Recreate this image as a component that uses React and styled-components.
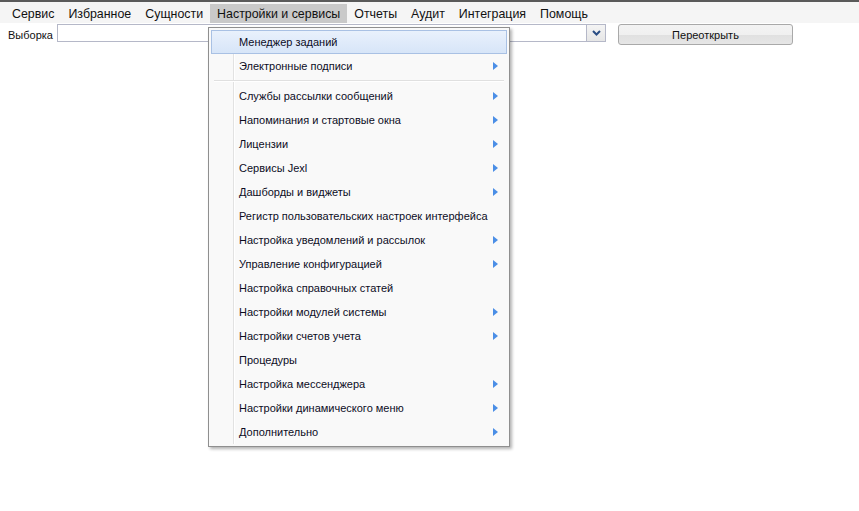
import React from 'react';
import styled, { createGlobalStyle } from 'styled-components';

const GlobalStyle = createGlobalStyle`
  html, body {
    margin: 0;
    padding: 0;
    background: #ffffff;
    font-family: 'Liberation Sans', Arial, sans-serif;
  }
`;

const Page = styled.div`
  position: relative;
  width: 859px;
  height: 511px;
  border-top: 2px solid #5a5a5a;
  box-sizing: border-box;
`;

const MenuBar = styled.div`
  display: flex;
  align-items: stretch;
  height: 21px;
  padding: 2px 0 0 5px;
  background: #f5f5f5;
  box-sizing: border-box;
`;

const MenuBarItem = styled.div`
  display: flex;
  align-items: center;
  padding: 0 7px;
  font-size: 12.4px;
  color: #111;
  background: ${(p) => (p.$active ? '#c9c9c9' : 'transparent')};
  height: 19px;
`;

const FilterRow = styled.div`
  display: flex;
  align-items: flex-start;
  padding: 1px 0 0 8px;
`;

const Label = styled.span`
  font-size: 11px;
  color: #111;
  width: 49px;
  line-height: 18px;
  margin-top: 2px;
`;

const Combo = styled.div`
  display: flex;
  height: 18px;
`;

const ComboInput = styled.div`
  width: 528px;
  height: 16px;
  border: 1px solid #b5b8c8;
  border-right: none;
  background: #fff;
`;

const ComboTrigger = styled.div`
  width: 18px;
  height: 16px;
  border: 1px solid #b5b8c8;
  background: linear-gradient(#f4f4f4, #e6e6e6);
  display: flex;
  align-items: center;
  justify-content: center;
`;

const ReopenButton = styled.div`
  margin-left: 12px;
  width: 173px;
  height: 19px;
  border: 1px solid #a9a9a9;
  border-radius: 3px;
  background: linear-gradient(#f3f3f3 0%, #f0f0f0 50%, #e0e0e0 51%, #e6e6e6 100%);
  font-size: 11px;
  color: #111;
  display: flex;
  align-items: center;
  justify-content: center;
`;

const Dropdown = styled.div`
  position: absolute;
  left: 208px;
  top: 25px;
  width: 296px;
  padding: 2px;
  background: #f9f9f9;
  border: 1px solid #8f8f8f;
  box-shadow: 2px 2px 3px rgba(0, 0, 0, 0.3);
  box-sizing: content-box;
  &::before {
    content: '';
    position: absolute;
    top: 2px;
    bottom: 2px;
    left: 24px;
    width: 1px;
    background: #e2e2e2;
    border-right: 1px solid #ffffff;
  }
`;

const Item = styled.div`
  position: relative;
  display: flex;
  align-items: center;
  height: 24px;
  box-sizing: border-box;
  padding-left: 27px;
  font-size: 11px;
  color: #0d0d1f;
  border: 1px solid ${(p) => (p.$active ? '#a9c1e4' : 'transparent')};
  background: ${(p) => (p.$active ? 'linear-gradient(#e9f1fc, #d7e5f8)' : 'transparent')};
  z-index: 1;
`;

const Separator = styled.div`
  position: relative;
  z-index: 1;
  height: 1px;
  margin: 2px 3px 2px 3px;
  background: #e0e0e0;
  border-bottom: 1px solid #fff;
`;

const Arrow = styled.span`
  position: absolute;
  right: 8px;
  top: 7px;
  width: 0;
  height: 0;
  border-top: 4px solid transparent;
  border-bottom: 4px solid transparent;
  border-left: 5px solid #4b8ee6;
`;

const topMenu = [
  { label: 'Сервис' },
  { label: 'Избранное' },
  { label: 'Сущности' },
  { label: 'Настройки и сервисы', active: true },
  { label: 'Отчеты' },
  { label: 'Аудит' },
  { label: 'Интеграция' },
  { label: 'Помощь' },
];

const items = [
  { label: 'Менеджер заданий', active: true },
  { label: 'Электронные подписи', sub: true },
  { sep: true },
  { label: 'Службы рассылки сообщений', sub: true },
  { label: 'Напоминания и стартовые окна', sub: true },
  { label: 'Лицензии', sub: true },
  { label: 'Сервисы Jexl', sub: true },
  { label: 'Дашборды и виджеты', sub: true },
  { label: 'Регистр пользовательских настроек интерфейса' },
  { label: 'Настройка уведомлений и рассылок', sub: true },
  { label: 'Управление конфигурацией', sub: true },
  { label: 'Настройка справочных статей' },
  { label: 'Настройки модулей системы', sub: true },
  { label: 'Настройки счетов учета', sub: true },
  { label: 'Процедуры' },
  { label: 'Настройка мессенджера', sub: true },
  { label: 'Настройки динамического меню', sub: true },
  { label: 'Дополнительно', sub: true },
];

const App = () => {
  return (
    <Page>
      <GlobalStyle />
      <MenuBar>
        {topMenu.map((m) => (
          <MenuBarItem key={m.label} $active={m.active}>
            {m.label}
          </MenuBarItem>
        ))}
      </MenuBar>
      <FilterRow>
        <Label>Выборка</Label>
        <Combo>
          <ComboInput />
          <ComboTrigger>
            <svg width="9" height="6" viewBox="0 0 9 6">
              <path d="M1 1 L4.5 4.5 L8 1" fill="none" stroke="#2a4d84" strokeWidth="2" />
            </svg>
          </ComboTrigger>
        </Combo>
        <ReopenButton>Переоткрыть</ReopenButton>
      </FilterRow>
      <Dropdown>
        {items.map((it, i) =>
          it.sep ? (
            <Separator key={'sep' + i} />
          ) : (
            <Item key={it.label} $active={it.active}>
              {it.label}
              {it.sub && <Arrow />}
            </Item>
          )
        )}
      </Dropdown>
    </Page>
  );
};

export default App;
